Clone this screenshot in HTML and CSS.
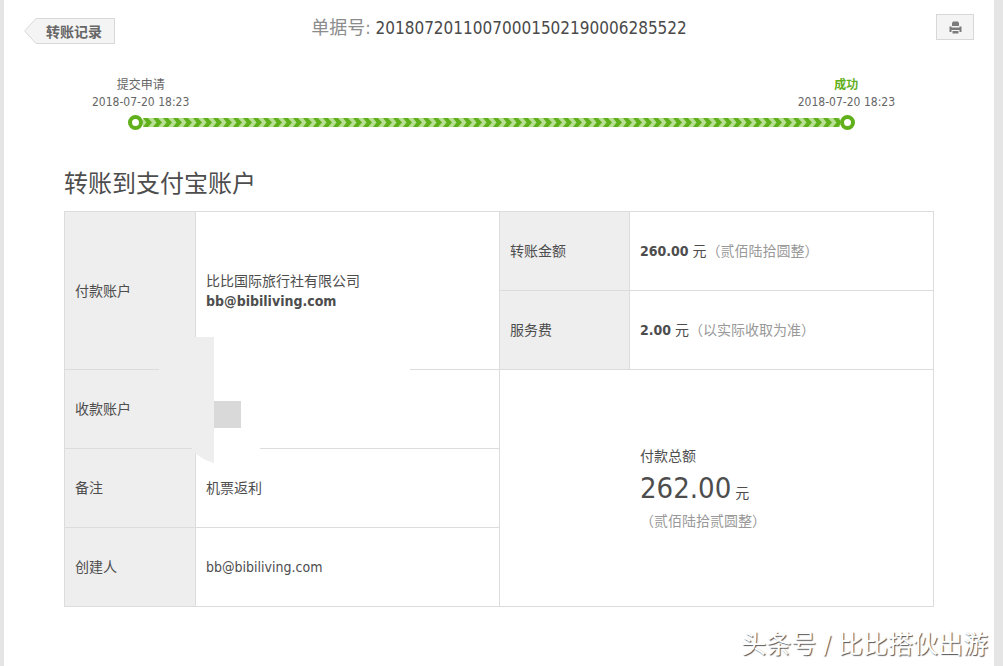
FILE: index.html
```html
<!DOCTYPE html>
<html lang="zh-CN">
<head>
    <meta charset="UTF-8">
    <meta name="viewport" content="width=device-width, initial-scale=1.0">
    <title>转账到支付宝账户</title>
    <link rel="stylesheet" href="styles.css">
</head>
<body>
    <main class="page">
        <header class="header">
            <a class="back-link" href="#">
                <svg class="back-arrow" width="12" height="26" viewBox="0 0 12 26">
                    <path d="M12 0.5 L0.7 13 L12 25.5 Z" fill="#f4f4f4"/>
                    <path d="M12 0.5 L0.7 13 L12 25.5" fill="none" stroke="#d8d8d8"/>
                </svg>
                <span class="back-text">转账记录</span>
            </a>
            <p class="order-no"><span class="order-label">单据号:</span> 20180720110070001502190006285522</p>
            <button class="print-button" type="button" aria-label="打印">
                <svg width="13" height="13" viewBox="0 0 13 13" fill="#7b7b7b">
                    <path d="M4 0.5 H9 L10 2 V5 H3 V2 Z"/>
                    <path d="M0.5 5.5 H2.5 V6.5 H10.5 V5.5 H12.5 V11 H10.5 V9 H2.5 V11 H0.5 Z"/>
                    <path d="M3.5 10 H9.5 V12.5 H3.5 Z"/>
                </svg>
            </button>
        </header>

        <!-- Progress -->
        <section class="progress">
            <div class="progress-labels">
                <div class="step">
                    <p>提交申请</p>
                    <p>2018-07-20 18:23</p>
                </div>
                <div class="step">
                    <p class="success">成功</p>
                    <p>2018-07-20 18:23</p>
                </div>
            </div>
            <div class="track">
                <svg class="dot" width="15" height="15" viewBox="0 0 15 15">
                    <circle cx="7.5" cy="7.5" r="5.5" fill="#fff" stroke="#5fb01a" stroke-width="4"/>
                </svg>
                <svg class="bar" width="100%" height="9">
                    <defs>
                        <pattern id="chevron" width="10" height="9" patternUnits="userSpaceOnUse">
                            <rect width="10" height="9" fill="#b7df94"/>
                            <path d="M0 0 H5 L9 4.5 L5 9 H0 L3.5 4.5 Z" fill="#5fb01a"/>
                        </pattern>
                    </defs>
                    <rect width="100%" height="9" fill="url(#chevron)"/>
                </svg>
                <svg class="dot" width="15" height="15" viewBox="0 0 15 15">
                    <circle cx="7.5" cy="7.5" r="5.5" fill="#fff" stroke="#5fb01a" stroke-width="4"/>
                </svg>
            </div>
        </section>

        <!-- Transfer details -->
        <section class="detail">
            <h1>转账到支付宝账户</h1>
            <div class="table-wrap">
                <table class="detail-table">
                    <colgroup>
                        <col class="col-label-first">
                        <col class="col-value">
                        <col class="col-label">
                        <col class="col-value">
                    </colgroup>
                    <tr>
                        <th scope="row" rowspan="2">付款账户</th>
                        <td rowspan="2">比比国际旅行社有限公司<br><strong>bb@bibiliving.com</strong></td>
                        <th scope="row">转账金额</th>
                        <td><strong>260.00</strong> 元<span class="note">（贰佰陆拾圆整）</span></td>
                    </tr>
                    <tr>
                        <th scope="row">服务费</th>
                        <td><strong>2.00</strong> 元<span class="note">（以实际收取为准）</span></td>
                    </tr>
                    <tr>
                        <th scope="row">收款账户</th>
                        <td></td>
                        <td class="total" colspan="2" rowspan="3">
                            <p>付款总额</p>
                            <p class="total-amount"><span class="amount">262.00</span> 元</p>
                            <p class="note">（贰佰陆拾贰圆整）</p>
                        </td>
                    </tr>
                    <tr>
                        <th scope="row">备注</th>
                        <td>机票返利</td>
                    </tr>
                    <tr>
                        <th scope="row">创建人</th>
                        <td>bb@bibiliving.com</td>
                    </tr>
                </table>
                <!-- Hides the payee -->
                <svg class="mask" width="251" height="127" viewBox="0 0 251 127">
                    <rect x="37" y="30" width="214" height="5" fill="#fff"/>
                    <rect x="37" y="108" width="64" height="7" fill="#fff"/>
                    <path d="M0 30 H36 V0 H55 V126 Q46 124 36 116 L33 113 V35 H0 Z" fill="#eee"/>
                    <rect x="55" y="64" width="27" height="27" fill="#d9d9d9"/>
                </svg>
            </div>
        </section>

        <p class="watermark">头条号 / 比比搭伙出游</p>
    </main>
</body>
</html>
```
FILE: styles.css
```css
* {
    margin: 0;
    padding: 0;
    box-sizing: border-box;
}

body {
    background-color: #e5e5e5;
    color: #4d4d4d;
    font-family: "DejaVu Sans Condensed", "Noto Sans", "Noto Sans CJK SC", sans-serif;
    font-size: 14px;
    line-height: 20px;
}

.page {
    position: relative;
    min-height: 100vh;
    margin: 0 9px 0 4px;
    padding: 14px 20px 0;
    background-color: #fff;
}

/* Header */
.header {
    display: grid;
    grid-template-columns: 1fr auto 1fr;
    align-items: start;
}

.back-link {
    display: flex;
    justify-self: start;
    margin-top: 4px;
    color: #666;
    font-weight: bold;
    text-decoration: none;
}

.back-text {
    height: 26px;
    padding: 0 12px 0 10px;
    border: 1px solid #d8d8d8;
    border-left: none;
    background-color: #f4f4f4;
    line-height: 26px;
}

.order-no {
    color: #4a4a4a;
    font-size: 17px;
    line-height: 28px;
}

.order-label {
    color: #8c8c8c;
    font-size: 18px;
}

.print-button {
    display: flex;
    justify-content: center;
    align-items: center;
    justify-self: end;
    width: 38px;
    height: 26px;
    border: 1px solid #d8d8d8;
    background-color: #f4f4f4;
    cursor: pointer;
}

/* Progress */
.progress {
    margin-top: 33px;
    color: #666;
    font-size: 12px;
    line-height: 17px;
}

.progress-labels {
    display: flex;
    justify-content: space-between;
    padding: 0 79px 0 68px;
}

.step {
    text-align: center;
}

.success {
    color: #5fb01a;
    font-weight: bold;
}

.track {
    display: flex;
    align-items: center;
    margin-top: 4px;
    padding: 0 119px 0 104px;
}

.dot {
    flex-shrink: 0;
}

.bar {
    flex: 1;
    min-width: 0;
}

/* Detail */
.detail {
    margin: 36px 40px 60px;
}

h1 {
    margin-bottom: 9px;
    font-size: 24px;
    font-weight: normal;
    line-height: 36px;
}

.table-wrap {
    position: relative;
}

.detail-table {
    width: 100%;
    border-collapse: collapse;
    table-layout: fixed;
}

.col-label-first {
    width: 131px;
}

.col-label {
    width: 130px;
}

.detail-table th,
.detail-table td {
    height: 79px;
    padding: 0 10px;
    border: 1px solid #dcdcdc;
    text-align: left;
}

.detail-table th {
    background-color: #eee;
    font-weight: normal;
}

.note {
    color: #999;
}

.detail-table .total {
    padding-left: 140px;
}

.total-amount {
    margin-top: 4px;
    line-height: 36px;
}

.amount {
    font-size: 29px;
}

.mask {
    position: absolute;
    top: 126px;
    left: 95px;
}

.watermark {
    position: absolute;
    right: 6px;
    bottom: 3px;
    color: #fff;
    font-size: 25px;
    line-height: 36px;
    text-shadow: 1px 1px 1px #555;
}
```
